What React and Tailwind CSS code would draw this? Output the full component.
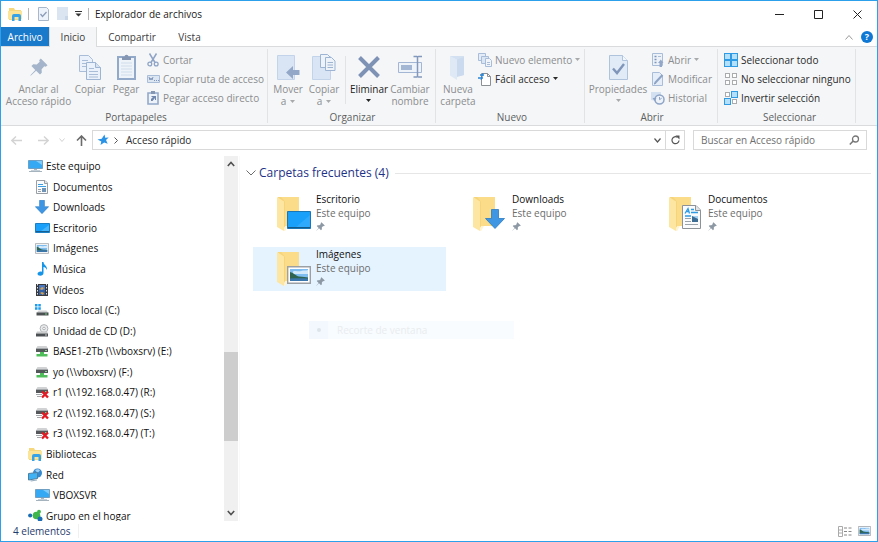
const Svg = ({ w, h, children, className = '' }) => (
  <svg width={w} height={h} viewBox={`0 0 ${w} ${h}`} fill="none" aria-hidden="true" className={`block shrink-0 ${className}`}>
    {children}
  </svg>
);

/* ---------- small shared shapes ---------- */

const Pin = ({ size = 9, color = '#8d98a5' }) => (
  <svg width={size} height={size} viewBox="0 0 20 20" aria-hidden="true" className="block shrink-0">
    <path fill={color} d="M12 .5 19.500 8l-2 1.700-1.600-.6-3 3.300.2 3.900-2 2-4.300-4.200L.8 19.600l-.4-.4 5.500-6-4.300-4.200 2-2 3.900.3 3.300-3-.6-1.700z" />
  </svg>
);

const Caret = ({ color = '#a7a9ab' }) => (
  <Svg w={5} h={3}><path d="M0 0h5L2.500 3z" fill={color} /></Svg>
);

const ExplorerIcon = ({ className }) => (
  <Svg w={15} h={14} className={className}>
    <path d="M1 1h5l1 2h6v10H1z" fill="#f6d77c" />
    <path d="M0 4h14v8H0z" fill="#fbe59a" />
    <path d="M4 14V9q0-2 2-2h5q2 0 2 2v5h-2.500v-4h-4v4z" fill="#36a3e8" />
  </Svg>
);

const NetDrive = ({ broken }) => (
  <Svg w={14} h={14}>
    <path d="M2.500 2h9l1.500 2.500H1z" fill="#d0d2d4" />
    <path d="M1 4.500h12V8H1z" fill="#55585a" />
    <path d="M1 4h12v1H1z" fill="#a6a9ab" />
    <path d="M10 6h2v1h-2z" fill="#7fd08a" />
    {broken ? (
      <>
        <path d="M1 9h6v1H1zM2 11h4v1H2z" fill="#a4a8aa" />
        <path d="m7 6.500 6 6m0-6-6 6" stroke="#e01b24" strokeWidth="2.400" />
      </>
    ) : (
      <path d="M5 8h4v2h3.500v2.500h-11V10H5z" fill="#4fbe5a" />
    )}
  </Svg>
);

const Monitor = () => (
  <Svg w={15} h={14}>
    <path d="M.5 1.500h14v8H.5z" fill="#35a9f3" stroke="#6f9fc2" />
    <path d="M8 2h6v4z" fill="#7fcbfa" />
    <path d="M6 10h3v1H6z" fill="#a9b7c2" />
    <path d="M3 11h9v1H3z" fill="#c5d0d8" />
    <path d="M1 12h13v1H1z" fill="#a4b3be" />
  </Svg>
);

const Picture = ({ w = 14, h = 11 }) => (
  <svg width={w} height={h} viewBox="0 0 24 18" aria-hidden="true" className="block shrink-0">
    <path d="M.7.700h22.600v16.600H.7z" fill="#fff" stroke="#9ba0a5" strokeWidth="1.400" />
    <path d="M3 3h18v12H3z" fill="#7fbcf0" />
    <path d="M6 5.500c3-1.500 5 .5 8-.5s5 0 7-1v4H6z" fill="#d4eafb" />
    <path d="M3 6c4 1 6 4 9 4.500 4 .5 7 .5 9 1V13H3z" fill="#2f6450" />
    <path d="M3 12.500c6-.5 12-.5 18 0V15H3z" fill="#3a76ab" />
  </svg>
);

const DownArrow = ({ size = 14 }) => (
  <svg width={size} height={size} viewBox="0 0 20 20" aria-hidden="true" className="block shrink-0">
    <path d="M6.500 .5h7v9h6L10 19.500.5 9.500h6z" fill="#3f97e4" stroke="#2a7ac4" strokeWidth=".8" />
  </svg>
);

const Doc = ({ w = 19, h = 24 }) => (
  <svg width={w} height={h} viewBox="0 0 19 24" aria-hidden="true" className="block shrink-0">
    <path d="M.5.500H14L18.500 5v18.500H.5z" fill="#fafbfc" stroke="#8c9298" />
    <path d="M13.500.500v5h5" fill="#e2e5e8" stroke="#8c9298" />
    <path d="m3 8.500 3-5 1.500 5M4.500 6.500h3M9 4.500h3M9 7.500h7M3 11h6" fill="none" stroke="#2f9be4" strokeWidth="1.300" />
    <path d="M3 13.500h6M3 16.500h6M3 19.500h13" stroke="#9aa3ac" />
    <path d="M10 11h6v6h-6z" fill="#3d6c95" />
    <path d="M10 11h6v3z" fill="#a8d5f5" />
  </svg>
);

/* ---------- navigation tree ---------- */

const SmallDoc = () => (
  <Svg w={12} h={14}>
    <path d="M.5.500h8.500l2.500 2.500v10.500H.5z" fill="#fafbfc" stroke="#999fa4" />
    <path d="M8.500.500v3h3" fill="#e2e5e8" stroke="#999fa4" />
    <path d="M2 4.500h5M2 6.500h8" stroke="#3d9fe2" />
    <path d="M2 9.500h3M2 11.500h3" stroke="#9aa3ac" />
    <path d="M6 8h4v4H6z" fill="#6f94b5" />
  </Svg>
);

const DesktopIcon = () => (
  <Svg w={15} h={12}>
    <path d="M.5 1.500h14v9H.5z" fill="#18a0fb" stroke="#1a7fc4" />
    <path d="M6 9 14 3v6z" fill="#46b5fb" />
    <path d="M1 9.500h13" stroke="#155f93" />
  </Svg>
);

const MusicIcon = () => (
  <Svg w={11} h={14}>
    <path d="M5 0h1.500c0 3 4 3.500 3.500 8-1-2-2-2.800-3.500-3v6c0 1.700-1.500 2.800-3.200 2.800S.5 13 .5 11.800 2 9.500 3.500 9.500c.6 0 1 .1 1.500.3z" fill="#1694e8" />
  </Svg>
);

const VideoIcon = () => (
  <Svg w={12} h={14}>
    <path d="M0 1h12v12H0z" fill="#3a3a3c" />
    <path d="M3 2h6v5H3z" fill="#4a79c4" />
    <path d="M3 7h6v5H3z" fill="#3161a8" />
    <path d="m4 6 2-2 2 1-2 2zM4 10l2-1 2 1-1 2z" fill="#d9a24a" />
    <path d="M1.500 1v12M10.500 1v12" stroke="#dfe2e4" strokeWidth="1" strokeDasharray="1.500 1.500" />
  </Svg>
);

const DiskIcon = () => (
  <Svg w={14} h={13}>
    <path d="M0 0h2.500v2.500H0zM3.300 0h2.500v2.500H3.300zM0 3.300h2.500v2.500H0zM3.300 3.300h2.500v2.500H3.300z" fill="#1a9cf0" />
    <path d="M3.500 6.500h8L13.500 9H1.500z" fill="#d0d2d4" />
    <path d="M1.500 8.500h12v3h-12z" fill="#4d5052" />
    <path d="M10 9.500h2v1h-2z" fill="#6cd07a" />
  </Svg>
);

const CdIcon = () => (
  <Svg w={14} h={13}>
    <circle cx="9" cy="4.500" r="3.900" fill="#e9ebec" stroke="#b0b3b5" />
    <circle cx="9" cy="4.500" r="1.300" fill="#fff" stroke="#96999c" strokeWidth=".7" />
    <path d="M2 7.500h10L13 9.500H1z" fill="#c9cbcd" />
    <path d="M1 9.500h12v3H1z" fill="#4d5052" />
    <path d="M10 10.500h2v1h-2z" fill="#c9cbcd" />
  </Svg>
);

const NetworkIcon = () => (
  <Svg w={15} h={14}>
    <circle cx="9.500" cy="5" r="4.500" fill="#3688cf" />
    <path d="M7 2c2-1 4-1 5 .5L9.500 5z" fill="#9fd0f3" />
    <path d="M.5 5.500 9.500 4.500v6l-9 1.500z" fill="#3fb2f5" stroke="#4f7f9f" />
    <path d="m2 12.500 7-1v1l-6 1z" fill="#9ab1c2" />
  </Svg>
);

const HomegroupIcon = () => (
  <Svg w={15} h={13}>
    <circle cx="2.200" cy="6.500" r="2.100" fill="#1c6cb4" />
    <circle cx="8.500" cy="6.500" r="3.800" fill="#3fb64b" />
    <circle cx="11" cy="2.700" r="1.900" fill="#3fb64b" />
    <circle cx="12" cy="10" r="2.500" fill="#1c6cb4" />
  </Svg>
);

const tree = [
  { name: 'Este equipo', icon: <Monitor /> },
  { name: 'Documentos', icon: <SmallDoc />, child: true },
  { name: 'Downloads', icon: <DownArrow />, child: true },
  { name: 'Escritorio', icon: <DesktopIcon />, child: true },
  { name: 'Imágenes', icon: <Picture />, child: true },
  { name: 'Música', icon: <MusicIcon />, child: true },
  { name: 'Vídeos', icon: <VideoIcon />, child: true },
  { name: 'Disco local (C:)', icon: <DiskIcon />, child: true },
  { name: 'Unidad de CD (D:)', icon: <CdIcon />, child: true },
  { name: 'BASE1-2Tb (\\\\vboxsrv) (E:)', icon: <NetDrive />, child: true },
  { name: 'yo (\\\\vboxsrv) (F:)', icon: <NetDrive />, child: true },
  { name: 'r1 (\\\\192.168.0.47) (R:)', icon: <NetDrive broken />, child: true },
  { name: 'r2 (\\\\192.168.0.47) (S:)', icon: <NetDrive broken />, child: true },
  { name: 'r3 (\\\\192.168.0.47) (T:)', icon: <NetDrive broken />, child: true },
  { name: 'Bibliotecas', icon: <ExplorerIcon /> },
  { name: 'Red', icon: <NetworkIcon /> },
  { name: 'VBOXSVR', icon: <Monitor />, child: true },
  { name: 'Grupo en el hogar', icon: <HomegroupIcon /> },
];

/* ---------- ribbon ---------- */

const CopyPages = () => (
  <Svg w={22} h={25}>
    <path d="M.5.500h9l4 4v12H.5z" fill="#eaf1fa" stroke="#a9bdd8" />
    <path d="M3 5.500h6M3 8.500h8M3 11.500h8" stroke="#a9bdd8" />
    <path d="M7.500 7.500h9l5 5v12h-14z" fill="#eaf1fa" stroke="#9db4d3" />
    <path d="M16.500 7.500v5h5" fill="#d5e1f1" stroke="#9db4d3" />
    <path d="M10 13.500h5M10 16.500h9M10 19.500h9M10 22h9" stroke="#a9bdd8" />
  </Svg>
);

const Clipboard = () => (
  <Svg w={19} h={26}>
    <path d="M1 3h17v22H1z" fill="#eef3fa" stroke="#93a9ca" strokeWidth="2" />
    <path d="M4 9h11M4 12h11M4 15h11M4 18h11M4 21h11" stroke="#cfdcec" />
    <path d="M5 3h2.500C7.500 0 11.500 0 11.500 3H14v3H5z" fill="#8496b2" />
  </Svg>
);

const MoveIcon = () => (
  <Svg w={24} h={25}>
    <path d="M1.500.500h17v24h-17z" fill="#d9e5f4" stroke="#c3d4ea" />
    <path d="m10 17.500 7-6.500v4h6.500v5H17v4z" fill="#93a8c8" />
  </Svg>
);

const CopyToIcon = () => (
  <Svg w={24} h={26}>
    <path d="M.5 2.500h18v23H.5z" fill="#d9e5f4" stroke="#c3d4ea" />
    <path d="M8.500.500h7l3 3v10h-10z" fill="#eef3fa" stroke="#9db4d3" />
    <path d="M13.500 3.500h6l3.500 3.500v9.500h-9.500z" fill="#eef3fa" stroke="#9db4d3" />
    <path d="M15.500 8.500h5.500M15.500 11h5.500M15.500 13.500h5.500" stroke="#9db4d3" />
  </Svg>
);

const DeleteIcon = () => (
  <Svg w={22} h={22}><path d="m1.500 1.500 19 19m0-19-19 19" stroke="#7d92b4" strokeWidth="4" /></Svg>
);

const RenameIcon = () => (
  <Svg w={25} h={24}>
    <path d="M.5 7.500h23v10H.5z" fill="#eef3fa" stroke="#a3b7d4" />
    <path d="M3 10h11v5H3z" fill="#a3b6d3" />
    <path d="M15.500 1.500h3.500q.5 0 .5.800v19q0 .7-.5.700h-3.500M24 1.500h-3.500q-.8 0-.8.800M24 22h-3.500q-.8 0-.8-.7" stroke="#8299bd" strokeWidth="1.500" />
  </Svg>
);

const NewFolderIcon = () => (
  <Svg w={18} h={25}>
    <path d="M1 1h14v19l-5 1z" fill="#d3e0f1" />
    <path d="m1 1 7 3.500V25L1 20.500z" fill="#dfe9f6" />
    <path d="M8 4.500 15 2v18l-7 2z" fill="#cbdaee" />
  </Svg>
);

const PropertiesIcon = () => (
  <Svg w={19} h={25}>
    <path d="M.5.500h13l5 5v19H.5z" fill="#e1ebf7" stroke="#b0c3dd" />
    <path d="M13.500.500v5h5" fill="#f4f7fb" stroke="#b0c3dd" />
    <path d="m4 13.500 4 4.500 7-9" stroke="#7f96ba" strokeWidth="2.400" />
  </Svg>
);

const CutIcon = () => (
  <Svg w={12} h={14}>
    <path d="m2.500.500 5.500 9M9.500.500l-5.500 9" stroke="#8ea4c6" strokeWidth="1.500" />
    <circle cx="2.800" cy="11" r="1.900" stroke="#8ea4c6" strokeWidth="1.300" />
    <circle cx="9.200" cy="11" r="1.900" stroke="#8ea4c6" strokeWidth="1.300" />
  </Svg>
);

const PathIcon = () => (
  <Svg w={13} h={8}>
    <path d="M.5.500h12v7H.5z" fill="#dce6f3" stroke="#aabdd8" />
    <path d="m2 2 1 3 1-2 1 2 1-3M7 5.500h1M9 5.500h1M11 5.500h1" stroke="#7f96ba" />
  </Svg>
);

const PasteLinkIcon = () => (
  <Svg w={12} h={14}>
    <path d="M1 2h10v11H1z" fill="#eef3fa" stroke="#93a9ca" strokeWidth="1.600" />
    <path d="M4 0h4v3H4z" fill="#8496b2" />
    <path d="M4 10V8l2-2H4.500V5H9v4H8V7L5.500 10z" fill="#7187ad" />
  </Svg>
);

const NewItemIcon = () => (
  <Svg w={14} h={14}>
    <path d="M.5.500h7v7h-7z" fill="#e3ecf7" stroke="#a9bdd8" />
    <path d="M3.500 3.500h7v7h-7z" fill="#dbe6f4" stroke="#a9bdd8" />
    <path d="M7.500 5.500h4l2 2v6h-6z" fill="#f1f5fa" stroke="#a9bdd8" />
    <path d="M9 9.500h3M9 11.500h3" stroke="#a9bdd8" />
  </Svg>
);

const EasyAccessIcon = () => (
  <Svg w={14} h={14}>
    <path d="M3.500 1.500h6l3 3v9h-9z" fill="#fff" stroke="#8b9095" />
    <path d="M9.500 1.500v3h3" stroke="#8b9095" />
    <path d="M2 3h4M0 6h5" stroke="#2b86d6" strokeWidth="1.400" />
    <path d="m5 1-2 7" stroke="#2b86d6" />
  </Svg>
);

const OpenIcon = () => (
  <Svg w={12} h={14}>
    <path d="M.5.500h10v12H.5z" fill="#edf2f9" stroke="#a9bdd8" />
    <path d="M2.500 3.500h2M2.500 6.500h2M2.500 9.500h2" stroke="#7f96ba" strokeWidth="1.600" />
    <path d="M6 3.500h3" stroke="#a9bdd8" />
    <path d="M7.500 14v-4H6l2.800-3.500L11.500 10H10v4z" fill="#93a8c8" />
  </Svg>
);

const EditIcon = () => (
  <Svg w={12} h={14}>
    <path d="M.5.500h7l3 3v10H.5z" fill="#e4edf8" stroke="#a9bdd8" />
    <path d="m3 11 7.500-8" stroke="#8ea4c6" strokeWidth="2" />
    <path d="m2 12.500.5-2 1.500 1.300z" fill="#7187ad" />
  </Svg>
);

const HistoryIcon = () => (
  <Svg w={14} h={14}>
    <path d="M0 1h10v10L0 9z" fill="#d3e0f1" />
    <circle cx="8.500" cy="8.500" r="4.500" fill="#eef3fa" stroke="#8ea4c6" strokeWidth="1.500" />
    <path d="M8.500 6v2.700l2.200-1.500" stroke="#8ea4c6" />
    <path d="M1.500 7h4L3.500 10z" fill="#8ea4c6" />
  </Svg>
);

const SelectIcon = ({ on }) => (
  <Svg w={14} h={14}>
    {[[0, 0], [7, 0], [0, 7], [7, 7]].map(([x, y], i) =>
      on.includes(i) ? (
        <rect key={i} x={x + 0.5} y={y + 0.5} width="6" height="6" fill="#b5e0fb" stroke="#2f9be4" />
      ) : (
        <rect key={i} x={x + 1.5} y={y + 1.5} width="4" height="4" fill="#fff" stroke="#a9abad" />
      )
    )}
  </Svg>
);

const BigButton = ({ icon, lines, caret, active, width }) => (
  <button type="button" className={`flex flex-col items-center pt-[3px] ${width} ${active ? 'text-[#222222]' : 'text-[#8b8d90]'}`}>
    <span className="flex h-7 items-center">{icon}</span>
    <span className="mt-[2px] flex flex-col items-center leading-3 whitespace-nowrap">
      {lines.map((line, i) => (
        <span key={line} className="flex items-center gap-1">
          {line}
          {caret && i === 1 && <Caret />}
        </span>
      ))}
      {caret && lines.length === 1 && (
        <span className="flex h-[11px] items-center"><Caret color={active ? '#222222' : '#a7a9ab'} /></span>
      )}
    </span>
  </button>
);

const SmallButton = ({ icon, text, caret, active }) => (
  <button type="button" className={`flex h-[19px] items-center gap-[3px] whitespace-nowrap ${active ? 'text-[#2a2a2a]' : 'text-[#8b8d90]'}`}>
    <span className="flex w-[14px] justify-center">{icon}</span>
    {text}
    {caret && <Caret color={active ? '#2a2a2a' : '#a7a9ab'} />}
  </button>
);

const Group = ({ title, width, children }) => (
  <section aria-label={title} className={`my-[2px] flex shrink-0 flex-col border-r border-[#e1e3e5] ${width}`}>
    <div className="flex flex-1 items-start pt-px">{children}</div>
    <div className="text-center leading-3 text-[#5c5f62]">{title}</div>
  </section>
);

const Ribbon = () => (
  <div className="flex h-20 border-y border-[#dadbdc] bg-[#f5f6f7]">
    <Group title="Portapapeles" width="w-[267px] pl-1">
      <BigButton width="w-[67px]" icon={<Pin size={18} color="#a4b4ca" />} lines={['Anclar al', 'Acceso rápido']} />
      <BigButton width="w-9" icon={<CopyPages />} lines={['Copiar']} />
      <BigButton width="w-9" icon={<Clipboard />} lines={['Pegar']} />
      <div className="pl-[2px]">
        <SmallButton icon={<CutIcon />} text="Cortar" />
        <SmallButton icon={<PathIcon />} text="Copiar ruta de acceso" />
        <SmallButton icon={<PasteLinkIcon />} text="Pegar acceso directo" />
      </div>
    </Group>
    <Group title="Organizar" width="w-[168px] pl-[2px]">
      <BigButton width="w-9" icon={<MoveIcon />} lines={['Mover', 'a']} caret />
      <BigButton width="w-9" icon={<CopyToIcon />} lines={['Copiar', 'a']} caret />
      <div className="mx-[3px] mt-[6px] h-12 border-r border-[#e1e3e5]" />
      <BigButton width="w-10" icon={<DeleteIcon />} lines={['Eliminar']} caret active />
      <BigButton width="w-[42px]" icon={<RenameIcon />} lines={['Cambiar', 'nombre']} />
    </Group>
    <Group title="Nuevo" width="w-[149px] pl-1">
      <BigButton width="w-9" icon={<NewFolderIcon />} lines={['Nueva', 'carpeta']} />
      <div className="pl-[2px]">
        <SmallButton icon={<NewItemIcon />} text="Nuevo elemento" caret />
        <SmallButton icon={<EasyAccessIcon />} text="Fácil acceso" caret active />
      </div>
    </Group>
    <Group title="Abrir" width="w-[133px] pl-[2px]">
      <BigButton width="w-[62px]" icon={<PropertiesIcon />} lines={['Propiedades']} caret />
      <div className="pl-[2px]">
        <SmallButton icon={<OpenIcon />} text="Abrir" caret />
        <SmallButton icon={<EditIcon />} text="Modificar" />
        <SmallButton icon={<HistoryIcon />} text="Historial" />
      </div>
    </Group>
    <Group title="Seleccionar" width="w-[138px] pl-[6px]">
      <div>
        <SmallButton active icon={<SelectIcon on={[0, 1, 2, 3]} />} text="Seleccionar todo" />
        <SmallButton active icon={<SelectIcon on={[]} />} text="No seleccionar ninguno" />
        <SmallButton active icon={<SelectIcon on={[1, 2]} />} text="Invertir selección" />
      </div>
    </Group>
  </div>
);

/* ---------- window frame ---------- */

const TitleBar = () => (
  <header className="flex h-[26px] items-center pl-[7px]">
    <ExplorerIcon />
    <div className="mx-[5px] h-3 w-px bg-[#b5b5b5]" />
    <button type="button" aria-label="Propiedades" className="ml-1">
      <Svg w={11} h={14}>
        <path d="M.5.500h8l2 2v11H.5z" fill="#edf3fa" stroke="#a9b7ca" />
        <path d="m2.500 7 2 2.500L8.500 5" stroke="#8b9db8" strokeWidth="1.300" />
      </Svg>
    </button>
    <button type="button" aria-label="Nueva carpeta" className="ml-2">
      <Svg w={12} h={14}>
        <path d="M0 0h11v13H0z" fill="#dbe5f2" />
        <path d="M8 9h3v4H8z" fill="#c8d6e8" />
      </Svg>
    </button>
    <button type="button" aria-label="Personalizar barra" className="ml-[6px]">
      <Svg w={7} h={6}><path d="M0 0h7v1H0zM.5 2.500h6l-3 3z" fill="#333" /></Svg>
    </button>
    <div className="mx-[6px] h-3 w-px bg-[#b5b5b5]" />
    <h1 className="text-[#1a1a1a]">Explorador de archivos</h1>
    <div className="ml-auto flex h-full items-center">
      <button type="button" aria-label="Minimizar" className="flex w-10 justify-center">
        <Svg w={9} h={9}><path d="M0 4.500h9" stroke="#222" /></Svg>
      </button>
      <button type="button" aria-label="Maximizar" className="flex w-[38px] justify-center">
        <Svg w={9} h={9}><path d="M.5.500h8v8h-8z" stroke="#222" /></Svg>
      </button>
      <button type="button" aria-label="Cerrar" className="flex w-10 justify-center">
        <Svg w={9} h={9}><path d="m.5.500 8 8m0-8-8 8" stroke="#222" /></Svg>
      </button>
    </div>
  </header>
);

const Tabs = () => (
  <nav className="-mb-px flex h-5 items-stretch text-[#3c3c3c]">
    <button type="button" className="w-12 bg-[#1979ca] text-white">Archivo</button>
    <button type="button" className="relative w-12 border border-y-0 border-[#dadbdc] bg-[#f5f6f7]">Inicio</button>
    <button type="button" className="w-[70px]">Compartir</button>
    <button type="button" className="w-[45px]">Vista</button>
    <div className="ml-auto flex items-center gap-2 pr-1">
      <button type="button" aria-label="Minimizar la cinta">
        <Svg w={8} h={5}><path d="m.5 4.500 3.500-4 3.500 4" stroke="#9a9a9a" /></Svg>
      </button>
      <button type="button" aria-label="Ayuda" className="size-3 rounded-full bg-[#0f78d4] text-[9px] leading-3 font-bold text-white">?</button>
    </div>
  </nav>
);

const AddressBar = () => (
  <div className="flex h-[30px] items-center pr-[10px] pb-[2px] pl-[10px] text-[#2b2b2b]">
    <button type="button" aria-label="Atrás" className="flex w-[22px]">
      <Svg w={11} h={9}><path d="M5 .5.800 4.500 5 8.500M1 4.500h10" stroke="#d3d3d3" strokeWidth="1.400" /></Svg>
    </button>
    <button type="button" aria-label="Adelante" className="flex w-5 justify-center">
      <Svg w={11} h={9}><path d="m6 .5 4.200 4L6 8.500M10 4.500H0" stroke="#d3d3d3" strokeWidth="1.400" /></Svg>
    </button>
    <button type="button" aria-label="Recientes" className="flex w-[18px] justify-center">
      <Svg w={6} h={4}><path d="m.5.500 2.500 3 2.500-3" stroke="#d3d3d3" /></Svg>
    </button>
    <button type="button" aria-label="Subir" className="mr-px flex w-5 justify-center">
      <Svg w={11} h={11}><path d="M1 5.500 5.500 1 10 5.500M5.500 1.500V11" stroke="#6b6b6b" strokeWidth="1.600" /></Svg>
    </button>
    <div className="flex h-5 min-w-0 flex-1 items-center border border-[#d9d9d9] pl-1">
      <Svg w={12} h={12}>
        <path d="m7.500.500.700 3.200 3.500-.2-2.700 2.500 1.700 3.800L7.200 8.500 3.500 11l.8-3.500L.5 5.500l4.200-.8z" fill="#2b93e6" />
      </Svg>
      <Svg w={4} h={7} className="mr-2 ml-[5px]"><path d="m.5.500 3 3-3 3" stroke="#555" /></Svg>
      <span className="flex-1">Acceso rápido</span>
      <button type="button" aria-label="Ubicaciones anteriores" className="mr-1">
        <Svg w={7} h={5}><path d="m.5.500 3 3.500 3-3.500" stroke="#555" strokeWidth="1.200" /></Svg>
      </button>
      <button type="button" aria-label="Actualizar" className="flex h-full w-[19px] items-center justify-center border-l border-[#d9d9d9]">
        <Svg w={9} h={10}>
          <path d="M6.500 2.300A3.500 3.500 0 1 0 8 5.500" stroke="#555" strokeWidth="1.200" />
          <path d="M4.500.500h4v4z" fill="#555" />
        </Svg>
      </button>
    </div>
    <label className="ml-2 flex h-5 w-[174px] items-center border border-[#d9d9d9] pr-[6px] pl-[7px]">
      <input type="text" aria-label="Buscar" placeholder="Buscar en Acceso rápido" className="min-w-0 flex-1 outline-none placeholder:text-[#6f6f6f]" />
      <Svg w={11} h={11}>
        <circle cx="6.500" cy="4" r="3" stroke="#777" strokeWidth="1.300" />
        <path d="M4.200 6 .8 9.500" stroke="#777" strokeWidth="1.600" />
      </Svg>
    </label>
  </div>
);

const NavTree = () => (
  <aside className="flex w-[239px] shrink-0 border-r border-[#fafafa]">
    <div className="flex-1 overflow-hidden">
      <ul className="grid h-[370px] auto-rows-fr text-[#111111]">
        {tree.map(item => (
          <li key={item.name}>
            <a href="#" className={`flex h-full items-center gap-[3px] whitespace-nowrap ${item.child ? 'pl-[33px]' : 'pl-[26px]'}`}>
              <span className="flex w-4 justify-center">{item.icon}</span>
              {item.name}
            </a>
          </li>
        ))}
      </ul>
    </div>
    <div className="mr-px flex w-[14px] flex-col items-center bg-[#f0f0f0]">
      <Svg w={8} h={6} className="my-[5px]"><path d="M.8 5 4 1.500 7.200 5" stroke="#505050" strokeWidth="1.600" /></Svg>
      <div className="flex-[180]" />
      <div className="w-full flex-[89] bg-[#cdcdcd]" />
      <div className="flex-[64]" />
      <Svg w={8} h={6} className="my-[5px]"><path d="M.8 1 4 4.500 7.200 1" stroke="#505050" strokeWidth="1.600" /></Svg>
    </div>
  </aside>
);

const folders = [
  {
    name: 'Escritorio',
    badge: (
      <Svg w={24} h={18}>
        <path d="M.5.500h23v17H.5z" fill="#18a0fb" stroke="#1a76b5" />
        <path d="M9 16 23 4v12z" fill="#2ea9fb" />
        <path d="M1 16.500h22" stroke="#125a8a" />
      </Svg>
    ),
  },
  { name: 'Downloads', badge: <DownArrow size={20} /> },
  { name: 'Documentos', badge: <Doc /> },
  { name: 'Imágenes', badge: <Picture w={24} h={18} />, hover: true },
];

const FolderTile = ({ name, badge, hover }) => (
  <a href="#" className={`flex h-11 items-start pl-6 ${hover ? 'bg-[#e5f3ff]' : ''}`}>
    <span className="relative mt-1 h-9 w-[35px] shrink-0">
      <Svg w={24} h={36}>
        <path d="M1 1h21v29H8z" fill="#fbdc88" />
        <path d="M1 1h3l4 4.500V31l-1 1z" fill="#f5d47c" />
        <path d="m0 1 7 4.500V35l-7-4z" fill="#fde6a2" />
        <path d="m7 33 1-3h3l-3 5H7z" fill="#fff3d0" />
      </Svg>
      <span className="absolute right-px bottom-[3px] flex w-6 justify-center">{badge}</span>
    </span>
    <span className="ml-1 flex flex-col leading-[14px]">
      <span className="text-[#111111]">{name}</span>
      <span className="text-[#6d6d6d]">Este equipo</span>
      <span className="mt-[2px]"><Pin /></span>
    </span>
  </a>
);

const Content = () => (
  <main className="relative min-w-0 flex-1 pr-[6px] pl-[6px]">
    <h2 className="mt-2 flex h-[18px] items-center text-xs text-[#1e3287]">
      <Svg w={10} h={6} className="mr-[3px]"><path d="m.5.500 4.500 4.500L9.500.500" stroke="#6d6d6d" /></Svg>
      Carpetas frecuentes (4)
      <span className="ml-[6px] h-px flex-1 bg-[#e6e6e6]" />
    </h2>
    <div className="mt-[10px] ml-[7px] grid grid-cols-[repeat(auto-fill,193px)] gap-x-[3px] gap-y-[11px]">
      {folders.map(folder => <FolderTile key={folder.name} {...folder} />)}
    </div>
    {/* snip menu entry fading out */}
    <div className="absolute top-[165px] left-[69px] flex h-[18px] w-[205px] items-center bg-[#f8fcff] text-[#e9ecee]">
      <span className="flex h-full w-[19px] items-center justify-center bg-[#f2f8fe]">
        <span className="size-1 rounded-full bg-[#dde4ea]" />
      </span>
      <span className="ml-[9px]">Recorte de ventana</span>
    </div>
  </main>
);

const StatusBar = () => (
  <footer className="flex h-5 items-center pr-[6px] pl-3 text-[#1e3a6e]">
    <span className="border-r border-[#f0f0f0] pr-2">4 elementos</span>
    <div className="ml-auto flex items-center gap-[6px]">
      <button type="button" aria-label="Detalles">
        <Svg w={14} h={11}>
          <path d="M.5.500h4v10h-4zM.5 4h4M.5 7h4" stroke="#aaa" />
          <path d="M6 2h3M10.500 2h3M6 5.500h3M10.500 5.500h3M6 9h3M10.500 9h3" stroke="#888" />
        </Svg>
      </button>
      <button type="button" aria-label="Iconos grandes"><Picture w={13} h={10} /></button>
    </div>
  </footer>
);

export default function App() {
  return (
    <div className="flex h-screen flex-col border border-[#2da0ec] bg-white font-['Open_Sans','Noto_Sans',sans-serif] text-[10px] leading-[14px]">
      <TitleBar />
      <Tabs />
      <Ribbon />
      <AddressBar />
      <div className="flex min-h-0 flex-1">
        <NavTree />
        <Content />
      </div>
      <StatusBar />
    </div>
  );
}
